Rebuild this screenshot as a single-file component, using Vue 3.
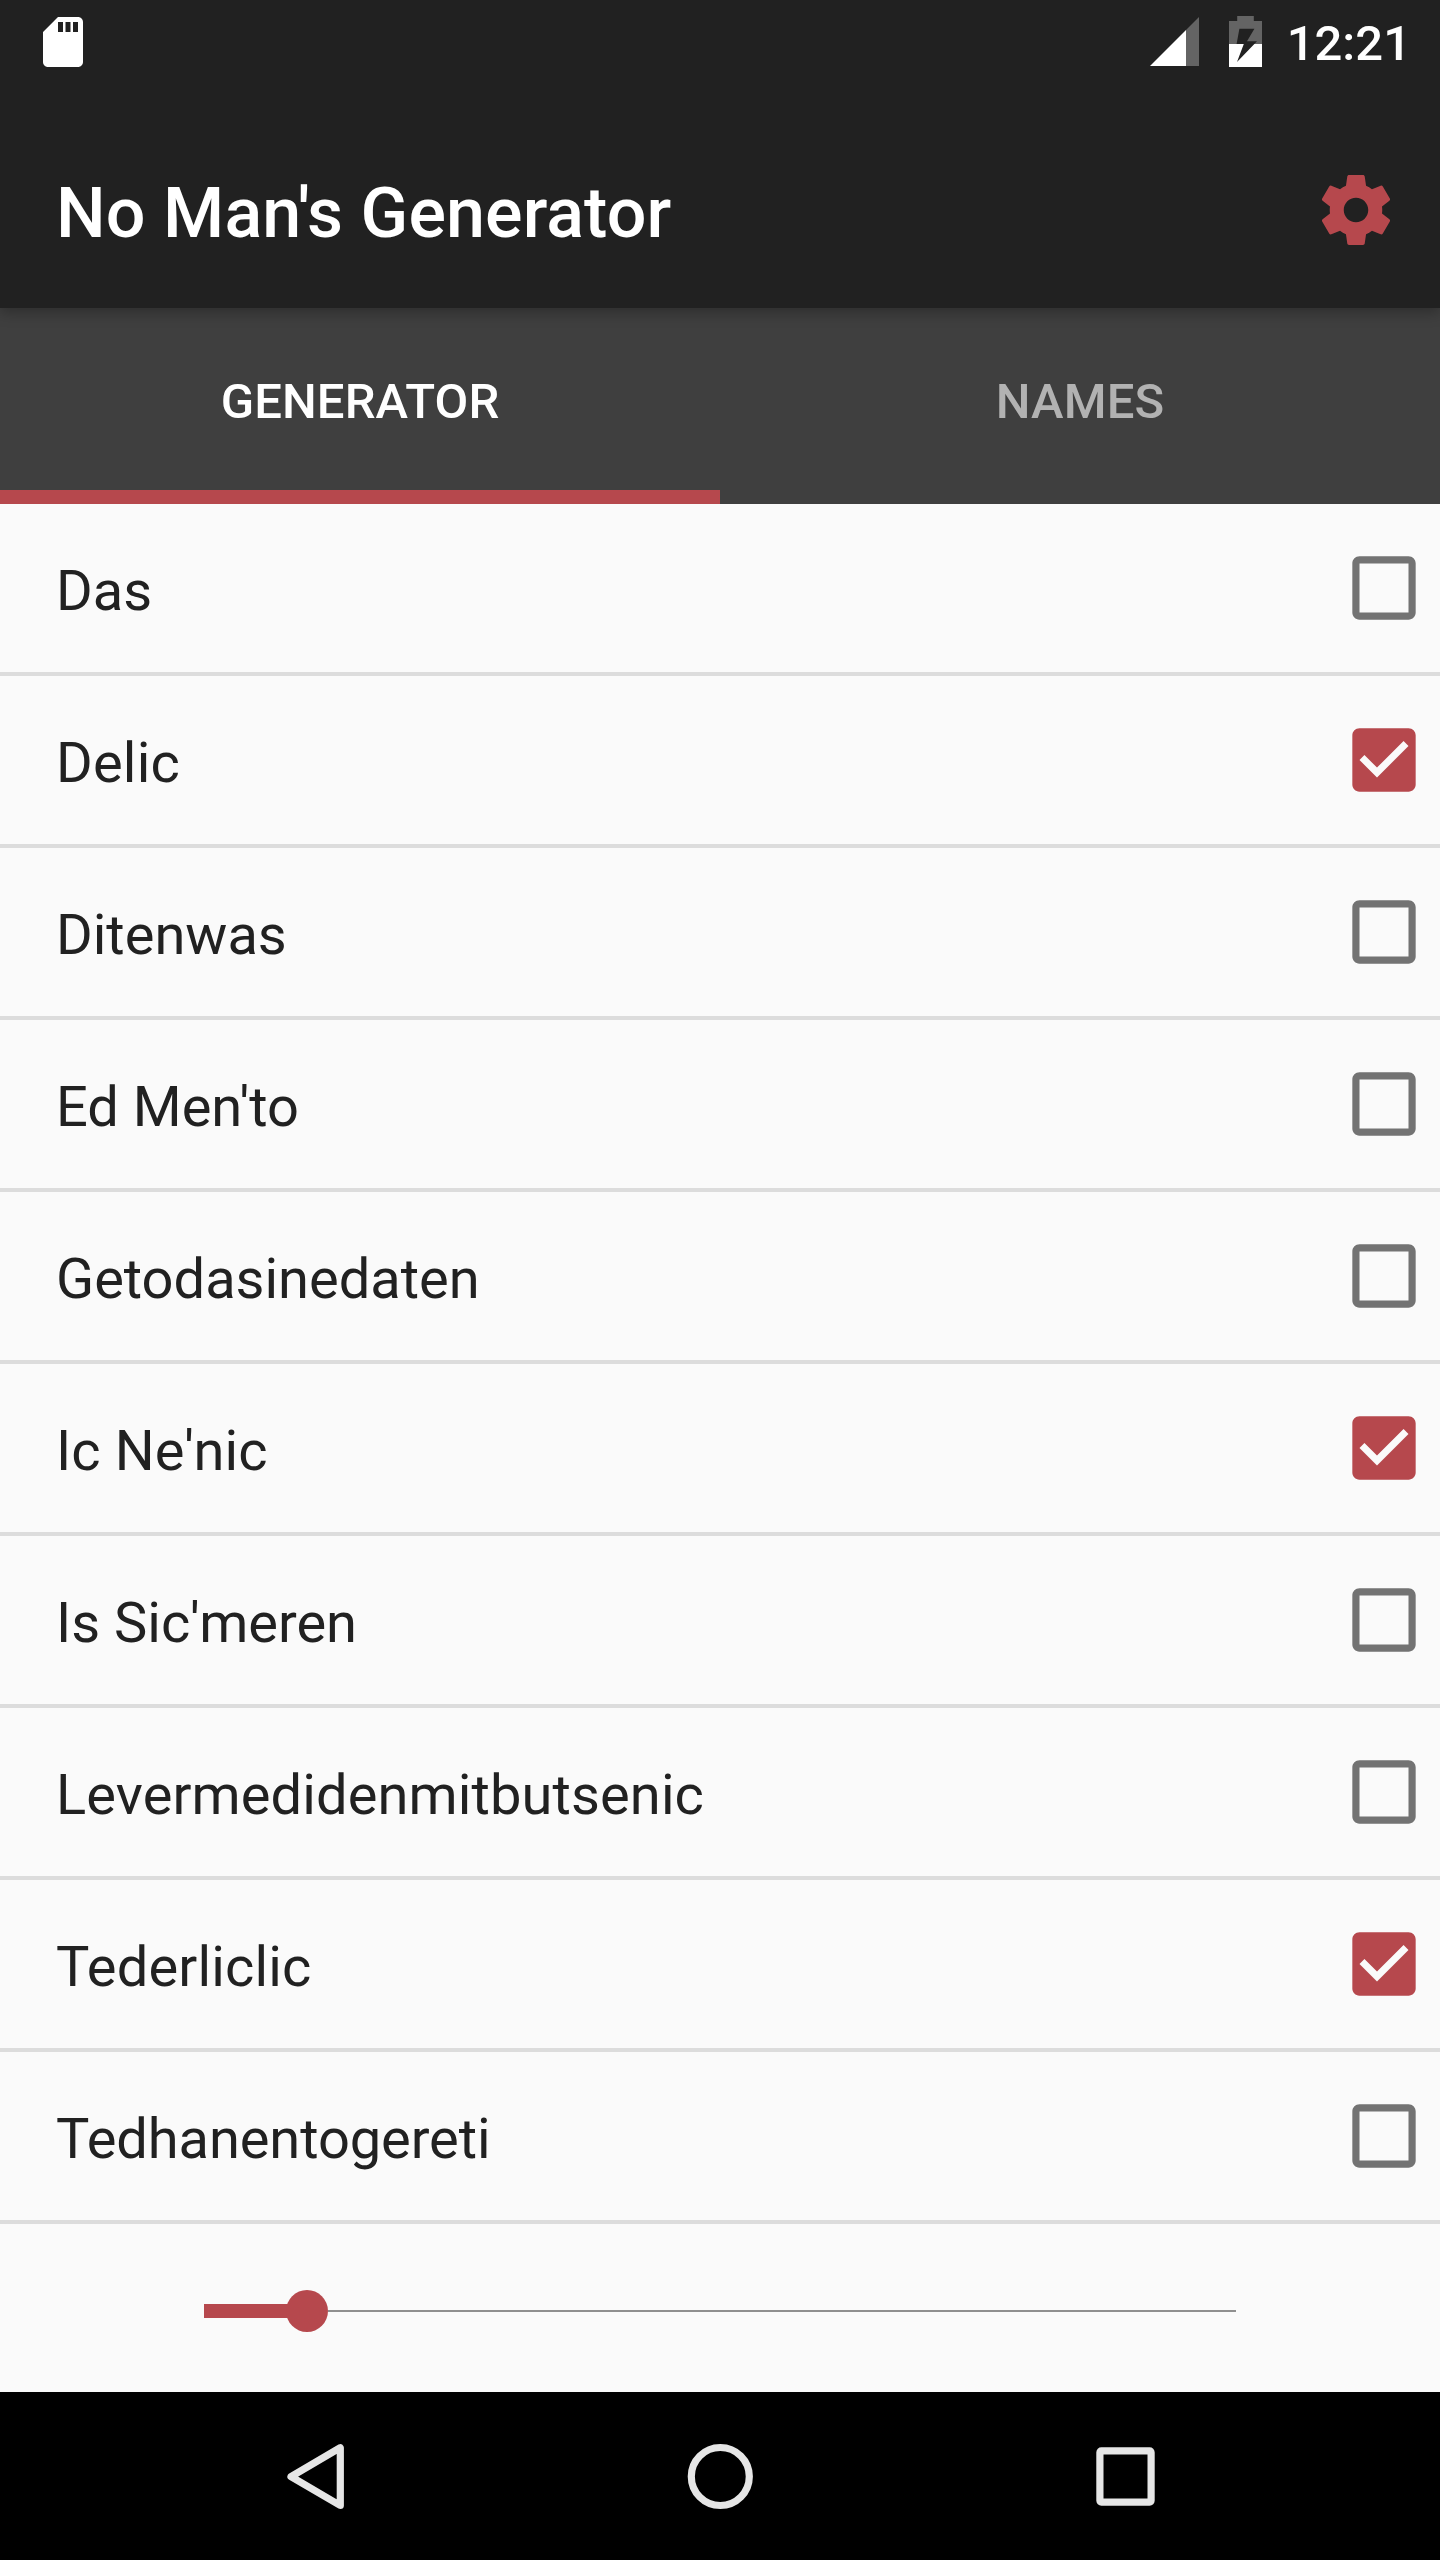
<script setup>
import { ref } from 'vue'

const tabs = ['Generator', 'Names']
const activeTab = ref('Generator')

const names = ref([
  { label: 'Das', checked: false, tracking: 0 },
  { label: 'Delic', checked: true, tracking: 0.2 },
  { label: 'Ditenwas', checked: false, tracking: 0 },
  { label: "Ed Men'to", checked: false, tracking: 0 },
  { label: 'Getodasinedaten', checked: false, tracking: 0 },
  { label: "Ic Ne'nic", checked: true, tracking: 0.1 },
  { label: "Is Sic'meren", checked: false, tracking: 0 },
  { label: 'Levermedidenmitbutsenic', checked: false, tracking: 0.12 },
  { label: 'Tederliclic', checked: true, tracking: 0.15 },
  { label: 'Tedhanentogereti', checked: false, tracking: -0.08 }
])

const progress = ref(10)
</script>

<template>
  <div class="screen">
    <header class="header">
      <div class="status">
        <svg class="sd" viewBox="0 0 24 24">
          <path d="M18 2h-8L4 8v12c0 1.1.9 2 2 2h12c1.1 0 2-.9 2-2V4c0-1.1-.9-2-2-2zm-6 6h-2V4h2v4zm3 0h-2V4h2v4zm3 0h-2V4h2v4z" />
        </svg>
        <div class="status-right">
          <svg class="signal" viewBox="0 0 49 49">
            <path class="dim" d="M36 13L49 0v49H36z" />
            <path d="M0 49L36 13v36z" />
          </svg>
          <svg class="battery" viewBox="0 0 33 51">
            <path class="dim" d="M8.2 0h16.6v5H33v23H0V5h8.2z" />
            <path d="M0 28h33v23H0z" />
            <path class="bolt" d="M10.4 12.8h15L18 25.2h10L8 46l6.8-18H7.6z" />
          </svg>
          <span class="clock">12:21</span>
        </div>
      </div>
      <div class="toolbar">
        <h1 class="title">No Man's Generator</h1>
        <svg class="gear" viewBox="0 0 24 24">
          <path d="M19.43 12.98c.04-.32.07-.64.07-.98s-.03-.66-.07-.98l2.11-1.65c.19-.15.24-.42.12-.64l-2-3.46c-.12-.22-.39-.3-.61-.22l-2.49 1c-.52-.4-1.08-.73-1.69-.98l-.38-2.65C14.46 2.18 14.25 2 14 2h-4c-.25 0-.46.18-.49.42l-.38 2.65c-.61.25-1.17.59-1.69.98l-2.49-1c-.23-.09-.49 0-.61.22l-2 3.46c-.13.22-.07.49.12.64l2.11 1.65c-.04.32-.07.65-.07.98s.03.66.07.98l-2.11 1.65c-.19.15-.24.42-.12.64l2 3.46c.12.22.39.3.61.22l2.49-1c.52.4 1.08.73 1.69.98l.38 2.65c.03.24.24.42.49.42h4c.25 0 .46-.18.49-.42l.38-2.65c.61-.25 1.17-.59 1.69-.98l2.49 1c.23.09.49 0 .61-.22l2-3.46c.12-.22.07-.49-.12-.64l-2.11-1.65zM12 15.5c-1.93 0-3.5-1.57-3.5-3.5s1.57-3.5 3.5-3.5 3.5 1.57 3.5 3.5-1.57 3.5-3.5 3.5z" />
        </svg>
      </div>
    </header>

    <nav class="tabs">
      <div
        v-for="tab in tabs"
        :key="tab"
        class="tab"
        :class="{ active: tab === activeTab }"
        @click="activeTab = tab"
      >{{ tab }}</div>
    </nav>

    <main class="list">
      <div
        v-for="name in names"
        :key="name.label"
        class="row"
        @click="name.checked = !name.checked"
      >
        <span class="label" :style="{ letterSpacing: name.tracking + 'px' }">{{ name.label }}</span>
        <svg class="checkbox" :class="{ checked: name.checked }" viewBox="0 0 24 24">
          <path
            v-if="name.checked"
            d="M19 2.95H5C3.85 2.95 2.95 3.85 2.95 5v14c0 1.15.9 2.05 2.05 2.05h14c1.15 0 2.05-.9 2.05-2.05V5c0-1.15-.9-2.05-2.05-2.05zM10 17l-5-5 1.41-1.41L10 14.17l7.59-7.59L19 8z"
          />
          <path
            v-else
            d="M19 5v14H5V5h14m0-2.05H5C3.85 2.95 2.95 3.85 2.95 5v14c0 1.15.9 2.05 2.05 2.05h14c1.15 0 2.05-.9 2.05-2.05V5c0-1.15-.9-2.05-2.05-2.05z"
          />
        </svg>
      </div>
    </main>

    <div class="slider">
      <div class="filled" :style="{ width: progress + '%' }"></div>
      <div class="thumb"></div>
      <div class="rest"></div>
    </div>

    <footer class="navbar">
      <svg viewBox="0 0 84 84">
        <path d="M67.3 13.7v57.8L18 42.6z" />
      </svg>
      <svg viewBox="0 0 84 84">
        <circle cx="42.3" cy="42.5" r="29" />
      </svg>
      <svg viewBox="0 0 84 84">
        <rect x="16.9" y="16.9" width="51.2" height="51.2" rx="1.5" />
      </svg>
    </footer>
  </div>
</template>

<style>
body {
  margin: 0;
}
</style>

<style scoped>
.screen {
  display: flex;
  flex-direction: column;
  width: 1440px;
  height: 2560px;
  overflow: hidden;
  background: #fafafa;
  color: #212121;
  font-family: Roboto, "Liberation Sans", sans-serif;
}

.header {
  position: relative;
  z-index: 1;
  height: 308px;
  background: #212121;
  color: #fff;
  box-shadow: 0 4px 14px rgba(0, 0, 0, 0.3);
}

.status {
  display: flex;
  align-items: center;
  justify-content: space-between;
  box-sizing: border-box;
  height: 84px;
  padding: 0 29px 0 33px;
  fill: #fff;
}

.sd {
  width: 60px;
  height: 60px;
}

.status-right {
  display: flex;
  align-items: center;
}

.signal {
  width: 49px;
  height: 49px;
  margin: 0 30px 1px 0;
}

.battery {
  width: 33px;
  height: 51px;
  margin: 0 23px 1px 0;
}

.dim {
  fill: #646464;
}

.bolt {
  fill: #212121;
}

.clock {
  width: 126px;
  padding-top: 4px;
  font-size: 49px;
  font-weight: 500;
  line-height: 58px;
  text-align: right;
  white-space: nowrap;
}

.toolbar {
  display: flex;
  align-items: center;
  justify-content: space-between;
  height: 196px;
  margin-top: 28px;
  padding: 0 42px 0 56px;
}

.title {
  margin: 0;
  padding-top: 6px;
  font-size: 70px;
  font-weight: 500;
  letter-spacing: 0.1px;
  line-height: 82px;
}

.gear {
  width: 84px;
  height: 84px;
  fill: #b6484d;
}

.tabs {
  display: flex;
  height: 196px;
  background: #3f3f3f;
}

.tab {
  flex: 1;
  box-sizing: border-box;
  padding-top: 3px;
  border-bottom: 14px solid transparent;
  color: #b2b2b2;
  font-size: 49px;
  font-weight: 500;
  letter-spacing: 0.12px;
  line-height: 181px;
  text-align: center;
  text-transform: uppercase;
}

.tab.active {
  border-color: #b6484d;
  color: #fff;
}

.row {
  display: flex;
  align-items: center;
  justify-content: space-between;
  height: 168px;
  padding: 0 14px 0 56px;
  border-bottom: 4px solid #dcdcdc;
}

.label {
  padding-top: 6px;
  font-size: 56px;
  line-height: 66px;
}

.checkbox {
  width: 84px;
  height: 84px;
  fill: #737373;
}

.checkbox.checked {
  fill: #b6484d;
}

.slider {
  display: flex;
  align-items: center;
  box-sizing: border-box;
  height: 168px;
  padding: 6px 204px 0;
}

.filled {
  height: 14px;
  background: #b6484d;
}

.thumb {
  flex: none;
  width: 42px;
  height: 42px;
  margin: 0 -21px;
  border-radius: 50%;
  background: #b6484d;
}

.rest {
  flex: 1;
  height: 2px;
  margin-left: 21px;
  background: #8f8f8f;
}

.navbar {
  display: flex;
  align-items: center;
  justify-content: space-between;
  box-sizing: border-box;
  height: 168px;
  padding: 0 273px;
  background: #000;
}

.navbar svg {
  width: 84px;
  height: 84px;
  fill: none;
  stroke: #e6e6e6;
  stroke-width: 7.2;
  stroke-linejoin: round;
}
</style>
